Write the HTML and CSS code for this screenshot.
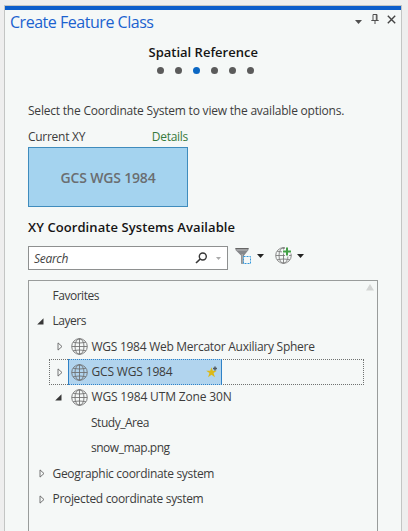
FILE: index.html
```html
<!DOCTYPE html>
<html lang="en">
<head>
<meta charset="utf-8">
<title>Create Feature Class</title>
<link rel="stylesheet" href="styles.css">
</head>
<body>
<svg class="defs" width="0" height="0" aria-hidden="true">
  <symbol id="globe" viewBox="0 0 17 17">
    <g fill="none" stroke="currentColor" stroke-width=".85">
      <circle cx="8.5" cy="8.5" r="7.8"/>
      <ellipse cx="8.5" cy="8.5" rx="4.500" ry="7.8"/>
      <path d="M8.5 .8v15.4M.8 8.5h15.4M2.3 4.500Q8.5 5.500 14.7 4.500M2.3 12.500Q8.5 11.500 14.7 12.500"/>
    </g>
  </symbol>
  <symbol id="closed" viewBox="0 0 6 9"><path d="M1 .9v7.2L5 4.5z" fill="none" stroke="#666" stroke-width=".9"/></symbol>
  <symbol id="open" viewBox="0 0 7 7"><path d="M6.5 .2v6.3H.2z" fill="#383838"/></symbol>
  <symbol id="down" viewBox="0 0 7 4"><path d="M0 0h7L3.5 4z" fill="currentColor"/></symbol>
</svg>
<section class="pane">
  <header class="titlebar">
    <h1>Create Feature Class</h1>
    <div class="tools">
      <svg class="menu" width="7" height="4"><use href="#down"/></svg>
      <svg class="pin" width="8" height="10" viewBox="0 0 8 10"><path d="M2 6V.5h4V6M.3 6.500h7.4M4 6.500V10M5.300 1v5" fill="none" stroke="#505050"/></svg>
      <svg class="close" width="9" height="9" viewBox="0 0 9 9"><path d="M.8.8l7.4 7.4M8.2.8L.8 8.2" stroke="#444" stroke-width="1.4"/></svg>
    </div>
  </header>
  <h2 class="step">Spatial Reference</h2>
  <div class="dots"><i></i><i></i><i class="on"></i><i></i><i></i><i></i></div>
  <main>
    <p class="intro">Select the Coordinate System to view the available options.</p>
    <div class="labels"><span class="current">Current XY</span><a class="details">Details</a></div>
    <div class="card"><span>GCS WGS 1984</span></div>
    <h3>XY Coordinate Systems Available</h3>
    <div class="searchrow">
      <div class="search">
        <span>Search</span>
        <svg class="lens" width="13" height="12" viewBox="0 0 13 12"><g fill="none" stroke="#383838"><circle cx="7.8" cy="4.5" r="3.5" stroke-width="1.4"/><path d="M5.2 7L1 11" stroke-width="1.700"/></g></svg>
        <svg class="pale" width="5" height="3" viewBox="0 0 7 4"><use href="#down"/></svg>
      </div>
      <svg class="filter" width="18" height="18" viewBox="0 0 18 18">
        <path d="M.5 1h13v2L9 8.500v8.200H6V8.500L.5 3z" fill="#85878a"/>
        <path d="M.5 1.500h13" stroke="#666"/><path d="M1.500 3h11" stroke="#bbb"/><path d="M7.200 7v9" stroke="#b5b5b5"/>
        <rect x="8.500" y="9.500" width="7" height="7" fill="#f5f8f7" stroke="#3298dc" stroke-dasharray="2 1"/>
      </svg>
      <svg class="arrow" width="7" height="4"><use href="#down"/></svg>
      <svg class="addglobe" width="17" height="17" viewBox="0 0 17 17"><use href="#globe" width="17" height="17" color="#777"/><path d="M12 0v9.500M7 4.500h10" stroke="#f5f8f7" stroke-width="4"/><path d="M12 .5v8M8 4.500h8" stroke="#43a047" stroke-width="2"/></svg>
      <svg class="arrow" width="7" height="4"><use href="#down"/></svg>
    </div>
    <div class="tree">
      <svg class="scroll" width="8" height="7" viewBox="0 0 8 7"><path d="M0 6.500h8L4 0z" fill="#d3d5d4"/></svg>
      <div class="row"><span class="tight">Favorites</span></div>
      <div class="row"><svg class="open" width="7" height="7"><use href="#open"/></svg><span class="tight">Layers</span></div>
      <div class="row sub"><svg class="closed" width="6" height="9"><use href="#closed"/></svg><svg class="globe" width="17" height="17"><use href="#globe"/></svg><span>WGS 1984 Web Mercator Auxiliary Sphere</span></div>
      <div class="row sub focus"><svg class="closed" width="6" height="9"><use href="#closed"/></svg><div class="selected"><svg class="globe" width="17" height="17"><use href="#globe"/></svg><span class="loose">GCS WGS 1984</span>
        <svg class="star" width="12" height="12" viewBox="0 0 12 12"><path d="M5.500 1.200l1.300 3.500h4L7.600 7l1.300 4.200-3.400-2.400-3.400 2.400L3.400 7 .2 4.700h4z" fill="#dcb918"/><path d="M9 .5v4M7 2.500h4" stroke="#505a62" stroke-width="1.500"/></svg></div></div>
      <div class="row sub"><svg class="open" width="7" height="7"><use href="#open"/></svg><svg class="globe" width="17" height="17"><use href="#globe"/></svg><span class="loose">WGS 1984 UTM Zone 30N</span></div>
      <div class="row leaf"><span class="tight">Study_Area</span></div>
      <div class="row leaf"><span class="tight">snow_map.png</span></div>
      <div class="row system"><svg class="closed" width="6" height="9"><use href="#closed"/></svg><span>Geographic coordinate system</span></div>
      <div class="row system"><svg class="closed" width="6" height="9"><use href="#closed"/></svg><span>Projected coordinate system</span></div>
    </div>
  </main>
</section>
</body>
</html>
```
FILE: styles.css
```css
* { box-sizing: border-box; }
body { margin: 0; height: 531px; overflow: hidden; background: #eeeeee; color: #3c3c3c; font: 12px/18px "Open Sans", "Noto Sans", sans-serif; padding: 5px 6px 0 4px; }
h1, h2, h3, p { margin: 0; font-weight: 400; }
svg { display: block; flex: none; }
.defs { position: absolute; }
span, a, h1, p { white-space: nowrap; }
.pane { height: 526px; border: 1px solid #c3c5c4; border-bottom: 0; background: #f5f8f7; box-shadow: inset 0 4px #0b5dcb; }
.titlebar { height: 34px; padding: 5px 5px 0; display: flex; justify-content: space-between; }
h1 { color: #1b62cf; font-size: 16px; line-height: 22px; letter-spacing: -.47px; }
.tools { display: flex; color: #505050; }
.menu { margin: 9px 9px 0 0; }
.pin { margin: 3px 8px 0 0; }
.close { margin: 4px 0 0; }
.step { height: 22px; padding: 3px 0 0 143.5px; font-size: 13px; line-height: 18px; font-weight: 600; color: #151515; letter-spacing: 0; white-space: nowrap; }
.dots { height: 18px; padding: 5px 0 0 152px; display: flex; gap: 11px; }
.dots i { width: 7px; height: 7px; border-radius: 50%; background: #5b5b5b; }
.dots .on { background: #0b67c3; }
main { padding-left: 23px; }
.intro { height: 22px; margin-top: 22px; letter-spacing: -.21px; }
.labels { width: 160px; height: 19px; margin-top: 4px; display: flex; justify-content: space-between; letter-spacing: -.28px; }
.details { color: #357a3c; }
.card { width: 160px; height: 60px; border: 1px solid #3f8cbd; background: #a4d3ef; display: flex; align-items: center; justify-content: center; font-size: 14px; font-weight: 600; letter-spacing: -.18px; color: #6a6d70; padding-top: 2px; }
h3 { height: 39px; padding-top: 10px; font-size: 13px; line-height: 20px; font-weight: 600; letter-spacing: .08px; color: #151515; white-space: nowrap; }
.searchrow { height: 34px; display: flex; color: #222; }
.search { width: 200px; height: 24px; border: 1px solid #8e9090; background: #fff; display: flex; padding-left: 5px; font-style: italic; line-height: 24px; letter-spacing: -.3px; color: #444; }
.search span { width: 161px; }
.lens { margin-top: 5px; }
.pale { margin: 10px 0 0 8px; color: #aaa; }
.filter { margin: 1px 4px 0 7px; }
.arrow { margin-top: 8px; }
.addglobe { margin: 1px 5px 0 11px; }
.tree { position: relative; width: 350px; height: 260px; border: 1px solid #999c9b; padding-top: 2px; letter-spacing: -.27px; }
.tight { letter-spacing: -.48px; }
.loose { letter-spacing: -.16px; }
.scroll { position: absolute; right: 3px; top: 3px; }
.row { height: 25.44px; display: flex; align-items: center; padding-left: 23.5px; }
.row > .open { margin: 0 9px 0 -16px; }
.row > .closed { margin: 0 8px 0 -14px; }
.system { letter-spacing: -.32px; }
.sub { padding-left: 42px; }
.globe { color: #6d6d6d; margin-right: 3.5px; }
.leaf { padding-left: 62px; }
.focus { width: 315px; height: 26px; margin: 0 0 -.56px 20px; padding-left: 22px; border: 1px dotted #6f7271; }
.row.focus > .closed { margin: 0 5px 0 -15px; }
.focus .selected { width: 154px; height: 26px; margin: -1px 0; border: 1px solid #2f82c7; border-top-style: dotted; border-bottom-style: dotted; background: #b1d4ee; display: flex; align-items: center; padding-left: 2px; }
.star { margin-left: 33px; }
```
